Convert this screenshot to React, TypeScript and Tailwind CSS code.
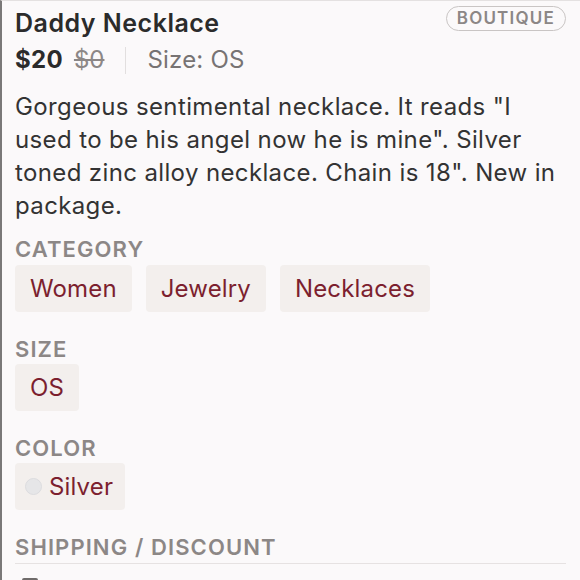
import React from "react";

const font = { fontFamily: '"Inter", "Liberation Sans", sans-serif' };

const Chip = ({ children }: { children: React.ReactNode }) => (
    <div className="flex items-center h-[47px] px-[15px] rounded-[4px] bg-[#f3efed] text-[#7c1f2f] text-[24px] leading-[29px] tracking-[0.15px]">
        {children}
    </div>
);

const Label = ({ children }: { children: React.ReactNode }) => (
    <div className="text-[22px] leading-[26px] font-semibold uppercase tracking-[1.1px] text-[#8c8786]">{children}</div>
);

export default function App() {
    return (
        <div
            className="w-[580px] h-[580px] overflow-hidden bg-[#fbf9fa] border-l-2 border-l-[#7a7878] border-t border-t-[#e4e1e1] pl-[13px] pr-[14px] text-[#2b2b2b]"
            style={font}
        >
            {/* title + badge */}
            <div className="flex justify-between items-start pt-[6px]">
                <h1 className="text-[25px] leading-[32px] font-semibold tracking-[0.5px]">Daddy Necklace</h1>
                <span className="-mt-[1px] px-[10px] h-[25px] flex items-center rounded-full border border-[#c9c5c4] text-[#8c8786] text-[17px] font-semibold tracking-[1.2px]">
                    BOUTIQUE
                </span>
            </div>

            {/* price row */}
            <div className="flex items-center h-[32px] mt-[5px]">
                <span className="text-[24px] font-bold tracking-[0.3px]">$20</span>
                <span className="ml-[11px] text-[24px] text-[#8c8786] line-through">$0</span>
                <span className="mx-[21px] w-px h-[27px] bg-[#e2dfdf]" />
                <span className="text-[24px] text-[#777373] tracking-[0.2px]">Size: OS</span>
            </div>

            <p className="mt-[14px] text-[24px] leading-[33px] tracking-[0.37px] text-[#333]">
                Gorgeous sentimental necklace. It reads "I used to be his angel now he is mine". Silver toned zinc alloy necklace. Chain is 18". New in package.
            </p>

            <div className="mt-[14px]">
                <Label>Category</Label>
                <div className="flex gap-[14px] mt-[3px]">
                    <Chip>Women</Chip>
                    <Chip>Jewelry</Chip>
                    <Chip>Necklaces</Chip>
                </div>
            </div>

            <div className="mt-[24px]">
                <Label>Size</Label>
                <div className="flex mt-[2px]">
                    <Chip>OS</Chip>
                </div>
            </div>

            <div className="mt-[24px]">
                <Label>Color</Label>
                <div className="flex mt-[2px]">
                    <div className="flex items-center h-[47px] pl-[10px] pr-[12px] rounded-[4px] bg-[#f3efed] text-[#7c1f2f] text-[24px] leading-[29px] tracking-[0.15px]">
                        <span className="w-[17px] h-[17px] rounded-full bg-[#e6e6e8] border border-[#dcdcdf] mr-[7px]" />
                        Silver
                    </div>
                </div>
            </div>

            <div className="mt-[24px]">
                <Label>Shipping / Discount</Label>
                <div className="mt-[3px] border-t border-[#e6e2e2]" />
                <div className="mt-[14px] ml-[7px] w-[16px] h-[10px] border-2 border-[#6f6b6a] rounded-[2px]" />
            </div>
        </div>
    );
}
